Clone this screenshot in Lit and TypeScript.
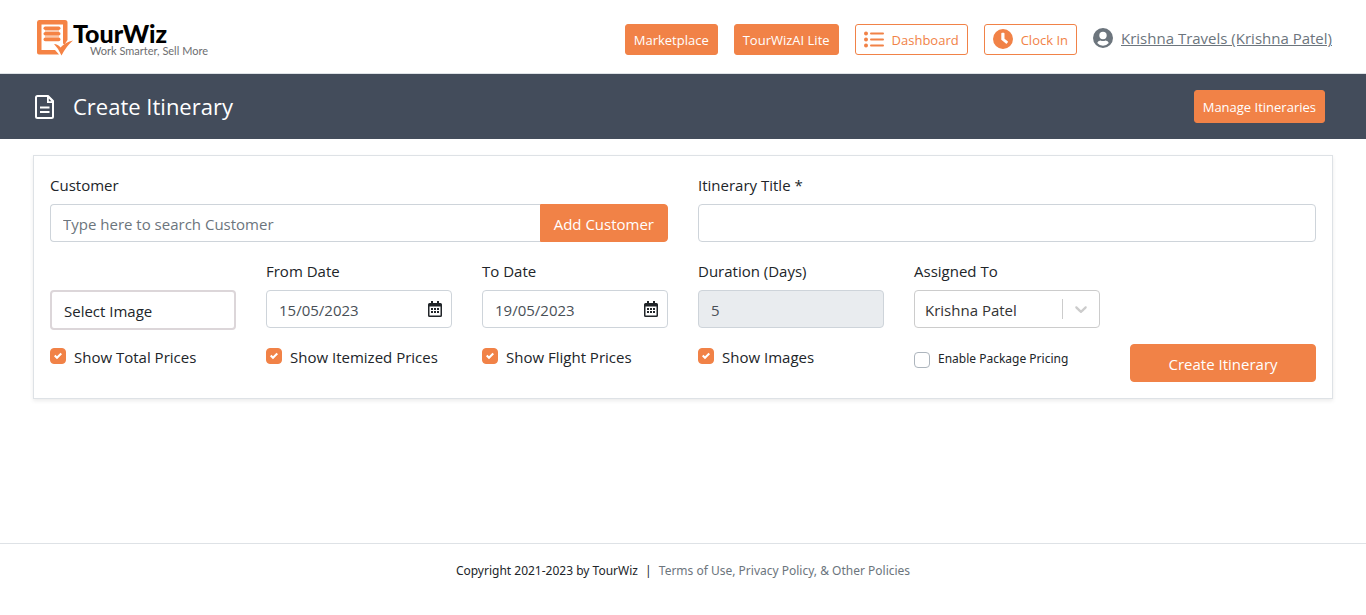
import { LitElement, html, css } from "lit";
import { customElement, property } from "lit/decorators.js";

@customElement("check-field")
export class CheckField extends LitElement {
  @property() label = "";
  @property({ type: Boolean }) checked = false;
  @property({ type: Boolean, reflect: true }) small = false;

  static styles = css`
    :host {
      display: block;
    }
    .row {
      display: flex;
      align-items: flex-start;
      gap: 8px;
      padding-top: 4px;
      white-space: nowrap;
    }
    .box {
      appearance: none;
      flex: none;
      width: 16px;
      height: 16px;
      margin: 0;
      border: 1px solid #adb5bd;
      border-radius: 4px;
      background: #fff;
    }
    .box:checked {
      border-color: #f18247;
      background: #f18247
        url("data:image/svg+xml,%3Csvg xmlns='http://www.w3.org/2000/svg' viewBox='0 0 8 8'%3E%3Cpath fill='%23fff' d='M6.564.75l-3.59 3.612-1.538-1.55L0 4.26 2.974 7.25 8 2.193z'/%3E%3C/svg%3E")
        center / 8px 8px no-repeat;
    }
    .text {
      font-size: 15px;
      line-height: 18px;
    }
    :host([small]) .row {
      padding-top: 8px;
    }
    :host([small]) .text {
      font-family: "Noto Sans", sans-serif;
      font-size: 12px;
      line-height: 14px;
    }
  `;

  render() {
    return html`<div class="row">
      <input class="box" type="checkbox" id="c" .checked=${this.checked} />
      <label class="text" for="c">${this.label}</label>
    </div>`;
  }
}

@customElement("app-root")
export class AppRoot extends LitElement {
  static styles = css`
    * {
      box-sizing: border-box;
    }
    :host {
      display: flex;
      flex-direction: column;
      min-height: 100vh;
      background: #fff;
      color: #212529;
      font-family: "Open Sans", "Noto Sans", sans-serif;
      font-size: 15px;
      line-height: 24px;
    }
    button,
    input,
    select {
      font: inherit;
      margin: 0;
    }
    .header {
      display: flex;
      align-items: center;
      justify-content: space-between;
      height: 74px;
      padding: 0 34px 0 36px;
      border-bottom: 1px solid #dee2e6;
    }
    .brand {
      display: flex;
      align-items: flex-start;
      padding-top: 4px;
      color: #000;
      text-decoration: none;
      font-family: Lato, sans-serif;
    }
    .brand-text {
      display: flex;
      flex-direction: column;
      padding-top: 2px;
    }
    .brand-name {
      font-size: 25px;
      font-weight: 900;
      line-height: 22px;
    }
    .tagline {
      padding-left: 17px;
      color: #6d6e70;
      font-size: 11px;
      line-height: 14px;
    }
    .nav {
      display: flex;
      align-items: center;
      gap: 16px;
      padding-top: 5px;
    }
    .btn {
      display: flex;
      align-items: center;
      justify-content: center;
      gap: 8px;
      height: 31px;
      padding: 2px 8px 0;
      border: 1px solid #f18247;
      border-radius: 3px;
      background: #f18247;
      color: #fff;
      font-size: 13px;
      line-height: 20px;
      white-space: nowrap;
    }
    .btn.outline {
      background: #fff;
      color: #f18247;
      padding-top: 0;
    }
    .btn.outline span {
      padding-top: 2px;
    }
    .btn.manage {
      height: 33px;
      padding-top: 0;
    }
    .btn.large {
      width: 100%;
      height: 38px;
      border-radius: 4px;
      font-size: 15px;
    }
    .user {
      display: flex;
      align-items: center;
      gap: 8px;
      padding-bottom: 2px;
      color: #6c757d;
      white-space: nowrap;
    }
    svg {
      display: block;
      flex: none;
      fill: currentColor;
    }
    .title-bar {
      display: flex;
      align-items: center;
      justify-content: space-between;
      height: 65px;
      padding: 0 41px 0 33px;
      background: #434c5b;
      color: #fff;
    }
    .title {
      display: flex;
      align-items: center;
      gap: 16px;
      margin: 0;
      font-size: 22px;
      font-weight: 400;
      line-height: 28px;
    }
    .title span {
      padding-bottom: 2px;
    }
    .main {
      flex: 1;
      padding: 16px 33px;
    }
    .card {
      padding: 16px;
      border: 1px solid #dee2e6;
      background: #fff;
      box-shadow: 0 2px 4px rgba(0, 0, 0, 0.08);
    }
    .grid {
      display: grid;
      grid-template-columns: repeat(6, minmax(0, 1fr));
      column-gap: 30px;
      align-items: start;
    }
    .field {
      display: flex;
      flex-direction: column;
      gap: 8px;
      margin-bottom: 16px;
    }
    .wide {
      grid-column: span 3;
    }
    .picker {
      margin: 32px 0 14px;
    }
    .label {
      line-height: 24px;
      padding-top: 1px;
      height: 24px;
    }
    .control {
      display: flex;
      align-items: center;
      width: 100%;
      height: 38px;
      padding: 2px 12px 0;
      border: 1px solid #ced4da;
      border-radius: 4px;
      background: #fff;
      color: #495057;
      min-width: 0;
    }
    .control::placeholder {
      color: #6c757d;
      opacity: 1;
    }
    .control:disabled {
      background: #e9ecef;
    }
    .control.image {
      height: 40px;
      border: 2px solid #dcd6d9;
      color: #212529;
    }
    .group {
      display: flex;
    }
    .group .control {
      flex: 1;
      border-radius: 4px 0 0 4px;
      border-right: 0;
    }
    .group .btn {
      flex: none;
      width: auto;
      padding: 2px 13px 0;
      border-radius: 0 4px 4px 0;
    }
    .date {
      display: grid;
      align-items: center;
    }
    .date > * {
      grid-area: 1 / 1;
    }
    .date svg {
      justify-self: end;
      margin-right: 10px;
      color: #212529;
    }
    .select {
      display: grid;
      align-items: center;
    }
    .select > * {
      grid-area: 1 / 1;
    }
    .select .control {
      appearance: none;
      padding: 2px 44px 0 10px;
      border-color: #ccc;
      color: #333;
    }
    .arrow {
      display: flex;
      align-items: center;
      justify-self: end;
      height: 20px;
      padding: 0 8px;
      margin-right: 1px;
      border-left: 1px solid #ccc;
      color: #ccc;
      pointer-events: none;
    }
    .submit {
      grid-column: 6;
    }
    .footer {
      padding: 17px 16px 34px;
      border-top: 1px solid #dee2e6;
      font-family: "Noto Sans", sans-serif;
      font-size: 12px;
      line-height: 20px;
      text-align: center;
    }
    .sep {
      margin: 0 4px;
    }
    .policy {
      color: #6c757d;
      text-decoration: none;
    }
  `;

  private calendar() {
    return html`<svg width="14" height="16" viewBox="0 0 14 16" aria-hidden="true">
      <path fill-rule="evenodd" d="M3 0h2v2h4V0h2v2h1.500Q14 2 14 3.500v11Q14 16 12.500 16h-11Q0 16 0 14.500v-11Q0 2 1.500 2H3zM1.500 5.500v9h11v-9z" />
      <path d="M3 7h2v2H3zM6 7h2v2H6zM9 7h2v2H9zM3 10h2v2H3zM6 10h2v2H6zM9 10h2v2H9z" />
    </svg>`;
  }

  private dateField(id: string, label: string, value: string) {
    return html`<div class="field">
      <label class="label" for=${id}>${label}</label>
      <div class="date">
        <input class="control" id=${id} type="text" .value=${value} />
        ${this.calendar()}
      </div>
    </div>`;
  }

  render() {
    return html`
      <header class="header">
        <a class="brand" href="#">
          <svg width="37" height="36" viewBox="0 0 37 36" aria-hidden="true">
            <path fill="#f58345" fill-rule="evenodd" d="M3 0h26q2.500 0 2.500 2.500V20l-3 4.500-1.500-1V4.500H5.500v25.500h13.500l4 4.500H3q-2 0-2-2V2.500Q1 0 3 0z" />
            <path fill="#f58345" d="M18 24q4 0 6.500 3.500 5-5.500 12.500-7-7 6-11.500 15-3-7-7.500-11.500z" />
            <rect fill="#f58345" x="7.500" y="6.500" width="17" height="3.600" rx="1.800" />
            <rect fill="#f58345" x="7.500" y="12" width="17" height="3.600" rx="1.800" />
            <rect fill="#f58345" x="7.500" y="17.600" width="17" height="3.600" rx="1.800" />
            <path fill="#f58345" opacity=".45" d="M9 10.100h14v1.900H9zM9 15.600h14v2H9z" />
          </svg>
          <span class="brand-text">
            <span class="brand-name">TourWiz</span>
            <span class="tagline">Work Smarter, Sell More</span>
          </span>
        </a>
        <nav class="nav">
          <button class="btn">Marketplace</button>
          <button class="btn">TourWizAI Lite</button>
          <button class="btn outline">
            <svg width="20" height="17" viewBox="0 0 20 17" aria-hidden="true">
              <circle cx="2" cy="2.500" r="2" />
              <circle cx="2" cy="8.500" r="2" />
              <circle cx="2" cy="14.500" r="2" />
              <rect x="6" y="1.500" width="14" height="2" rx="1" />
              <rect x="6" y="7.500" width="14" height="2" rx="1" />
              <rect x="6" y="13.500" width="14" height="2" rx="1" />
            </svg>
            <span>Dashboard</span>
          </button>
          <button class="btn outline">
            <svg width="20" height="20" viewBox="0 0 20 20" aria-hidden="true">
              <path fill-rule="evenodd" d="M10 0a10 10 0 1 1 0 20a10 10 0 1 1 0-20zM9 3.800q-.7 0-.7.700v6.200l4.600 3.800q.6.400 1-.1l.9-1.100q.4-.6-.1-1l-3.200-2.600V4.500q0-.7-.7-.7z" />
            </svg>
            <span>Clock In</span>
          </button>
          <a class="user" href="#">
            <svg width="20" height="20" viewBox="0 0 20 20" aria-hidden="true">
              <path fill-rule="evenodd" d="M10 0a10 10 0 1 1 0 20a10 10 0 1 1 0-20zM10 3.800a3.700 3.700 0 1 0 0 7.400a3.700 3.700 0 1 0 0-7.400zM4.200 15a7.700 7.700 0 0 0 11.600 0q-.8-2.600-3.200-2.600-1.300.5-2.600.5t-2.600-.5q-2.400 0-3.200 2.600z" />
            </svg>
            <span>Krishna Travels (Krishna Patel)</span>
          </a>
        </nav>
      </header>
      <div class="title-bar">
        <h1 class="title">
          <svg width="24" height="24" viewBox="0 0 24 24" aria-hidden="true">
            <path fill="none" stroke="#fff" stroke-width="2" stroke-linejoin="round" d="M4.500 1H15l5 5v15.500q0 1.500-1.500 1.500H4.500Q3 23 3 21.500v-19Q3 1 4.500 1z" />
            <path d="M14 1.500h2l4.500 4.500v2H14z" />
            <path fill="#434c5b" d="M15.800 3.600l2.600 2.600h-2.600z" />
            <path d="M7 11.500h9.500v2H7zM7 16h9.500v2H7z" />
          </svg>
          <span>Create Itinerary</span>
        </h1>
        <button class="btn manage">Manage Itineraries</button>
      </div>
      <main class="main">
        <form class="card">
          <div class="grid">
            <div class="field wide">
              <label class="label" for="customer">Customer</label>
              <div class="group">
                <input class="control" id="customer" type="text" placeholder="Type here to search Customer" />
                <button class="btn large" type="button">Add Customer</button>
              </div>
            </div>
            <div class="field wide">
              <label class="label" for="title">Itinerary Title *</label>
              <input class="control" id="title" type="text" />
            </div>
            <div class="picker">
              <button class="control image" type="button">Select Image</button>
            </div>
            ${this.dateField("from", "From Date", "15/05/2023")}
            ${this.dateField("to", "To Date", "19/05/2023")}
            <div class="field">
              <label class="label" for="days">Duration (Days)</label>
              <input class="control" id="days" type="text" value="5" disabled />
            </div>
            <div class="field">
              <label class="label" for="assigned">Assigned To</label>
              <div class="select">
                <select class="control" id="assigned">
                  <option>Krishna Patel</option>
                </select>
                <span class="arrow">
                  <svg width="20" height="20" viewBox="0 0 20 20" aria-hidden="true">
                    <path d="M4.516 7.548c0.436-0.446 1.043-0.481 1.576 0l3.908 3.747 3.908-3.747c0.533-0.481 1.141-0.446 1.574 0 0.436 0.445 0.408 1.197 0 1.615-0.406 0.418-4.695 4.502-4.695 4.502-0.217 0.223-0.502 0.335-0.787 0.335s-0.570-0.112-0.789-0.335c0 0-4.287-4.084-4.695-4.502s-0.436-1.170 0-1.615z" />
                  </svg>
                </span>
              </div>
            </div>
          </div>
          <div class="grid">
            <check-field label="Show Total Prices" checked></check-field>
            <check-field label="Show Itemized Prices" checked></check-field>
            <check-field label="Show Flight Prices" checked></check-field>
            <check-field label="Show Images" checked></check-field>
            <check-field label="Enable Package Pricing" small></check-field>
            <div class="submit">
              <button class="btn large" type="button">Create Itinerary</button>
            </div>
          </div>
        </form>
      </main>
      <footer class="footer">
        <span>Copyright 2021-2023 by TourWiz</span>
        <span class="sep">|</span>
        <a class="policy" href="#">Terms of Use, Privacy Policy, &amp; Other Policies</a>
      </footer>
    `;
  }
}
